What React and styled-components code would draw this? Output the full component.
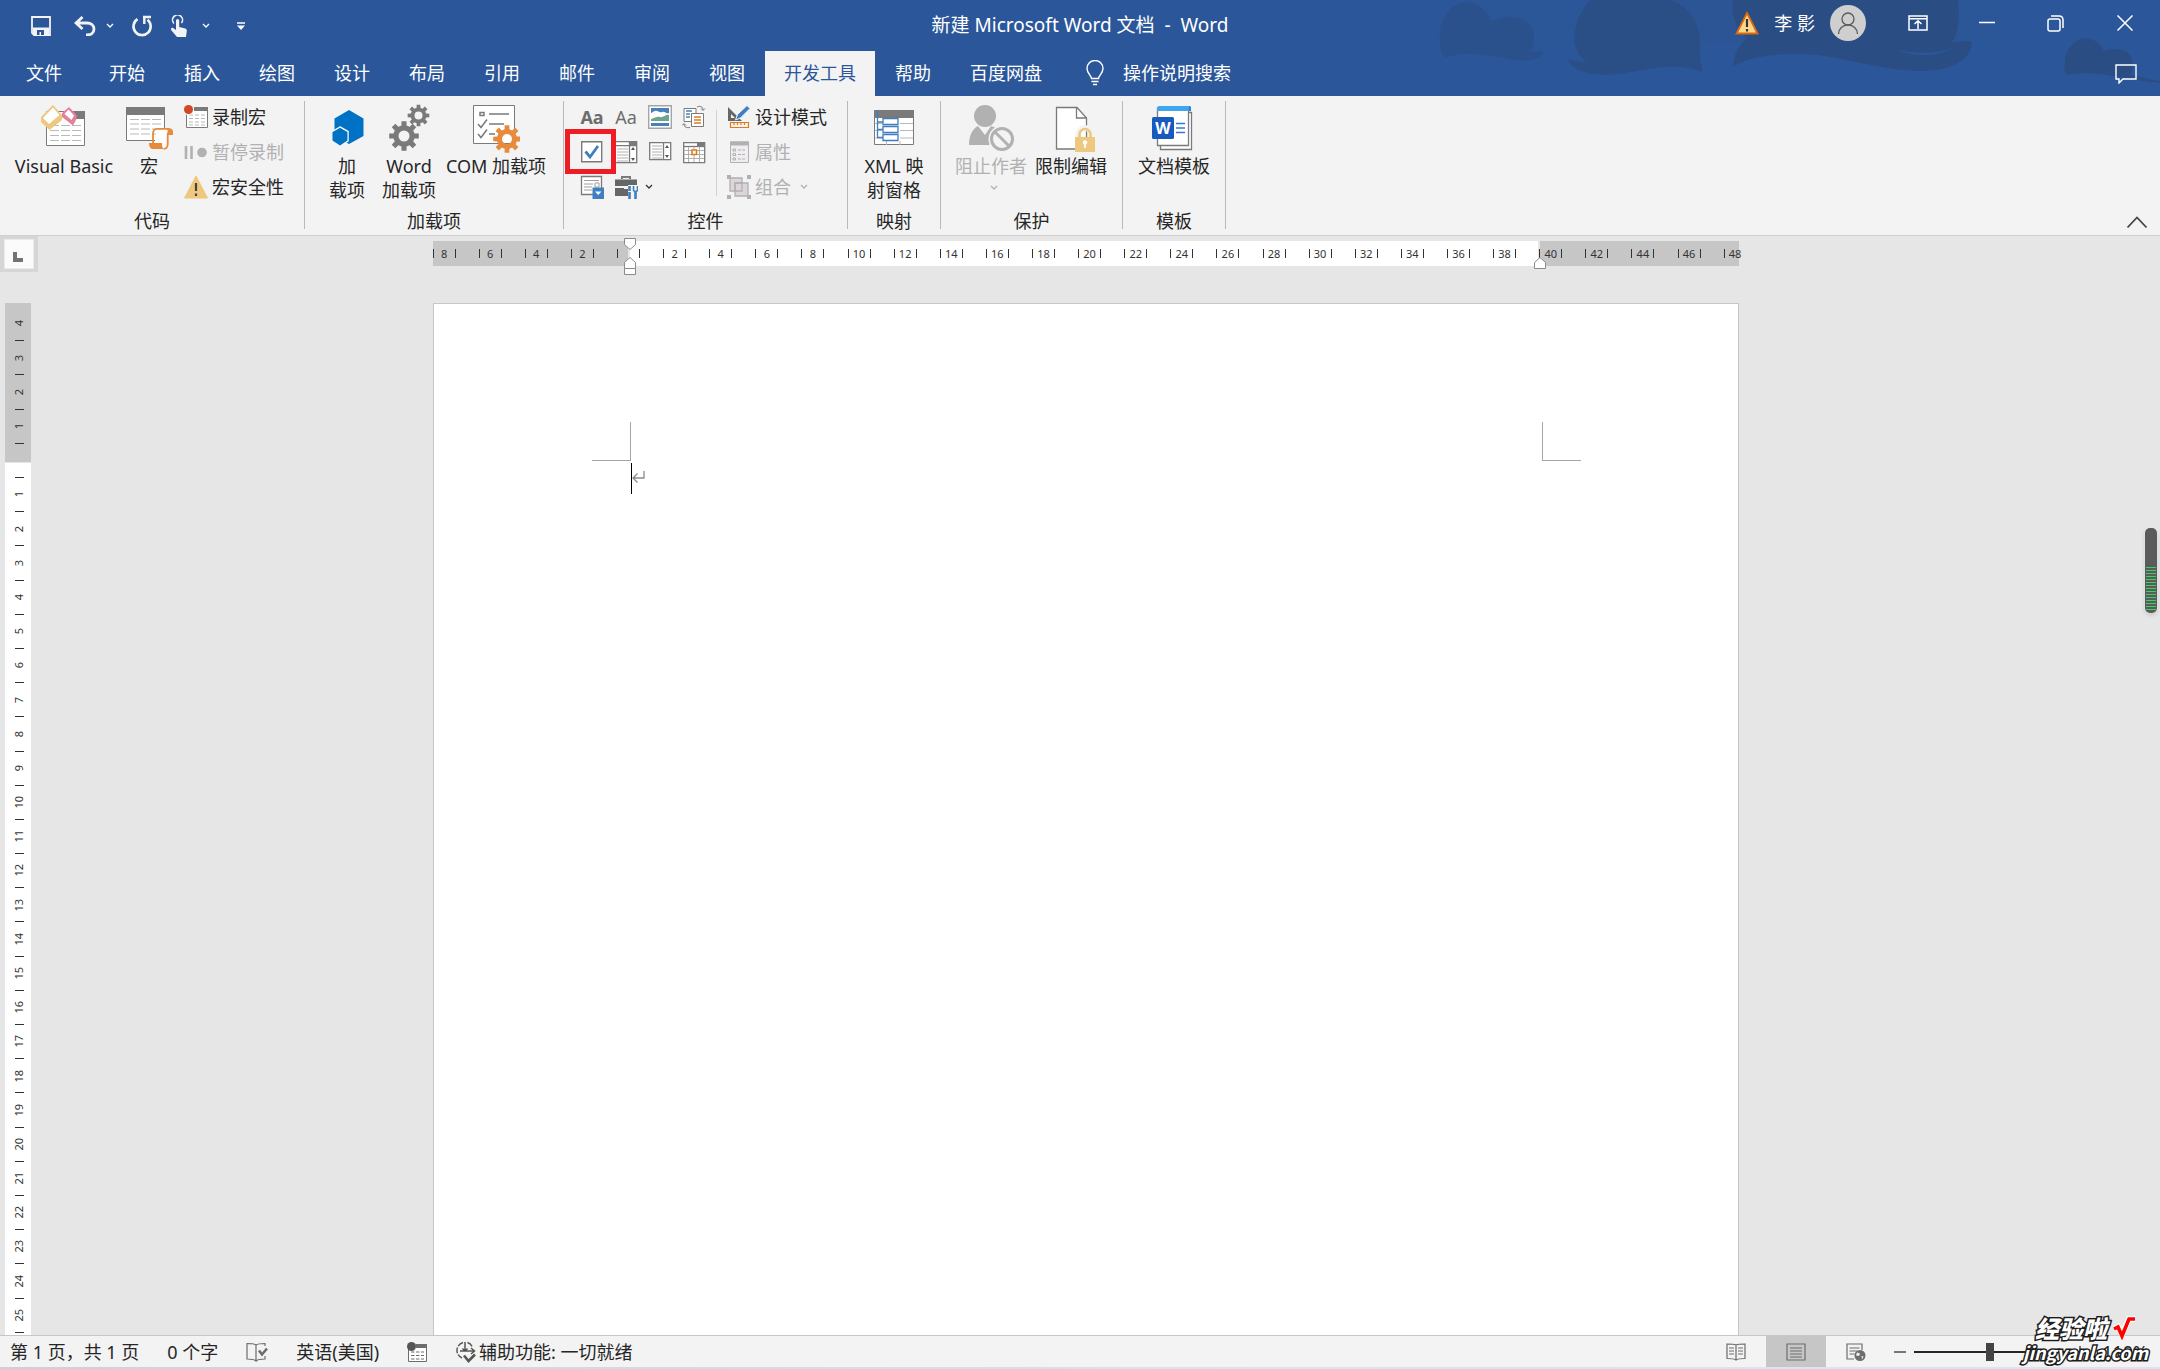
import React from "react";
import styled, { createGlobalStyle, css } from "styled-components";

const Global = createGlobalStyle`
  *, *::before, *::after { box-sizing: border-box; }
  body { margin: 0; }
  body, button, input {
    font-family: "Noto Sans", "Noto Sans CJK SC", sans-serif;
    font-size: 18px;
    line-height: 24px;
  }
  button { margin: 0; padding: 0; border: 0; background: none; color: inherit; cursor: pointer; white-space: nowrap; }
  svg { display: block; flex: none; }
`;

const Shell = styled.div`
  display: flex;
  flex-direction: column;
  height: 100vh;
  overflow: hidden;
  position: relative;
  background: #e6e6e6;
  color: #262626;
`;

/* ---------- header ---------- */

const Header = styled.header`
  position: relative;
  flex: none;
  background: #2b579a;
  color: #fff;
`;

const HeaderArt = styled.svg`
  position: absolute;
  top: 0;
  right: 0;
`;

const TitleBar = styled.div`
  position: relative;
  display: grid;
  grid-template-columns: 1fr auto 1fr;
  align-items: center;
  height: 51px;
`;

const QuickAccess = styled.div`
  display: flex;
  align-items: center;
  padding-left: 19px;
`;

const QuickButton = styled.button`
  display: flex;
  align-items: center;
  justify-content: center;
  width: ${(p) => p.$w}px;
  height: 32px;
`;

const DocTitle = styled.h1`
  margin: 0;
  padding-bottom: 2px;
  font-size: 19px;
  font-weight: 400;
  line-height: 24px;
  white-space: pre;
`;

const WindowTools = styled.div`
  display: flex;
  align-items: center;
  justify-content: flex-end;
  height: 46px;
  align-self: start;
  padding-right: 1px;
`;

const Account = styled.button`
  display: flex;
  align-items: center;
  gap: 15px;
  margin-right: 17px;
`;

const WindowButton = styled.button`
  display: flex;
  align-items: center;
  justify-content: center;
  width: 69px;
  height: 46px;
`;

const TabBar = styled.nav`
  position: relative;
  display: flex;
  gap: 1px;
  height: 45px;
`;

const Tab = styled.button`
  display: flex;
  align-items: center;
  padding: ${(p) => (p.$wide ? "0 27px 2px 26px" : "0 19px 2px")};
  height: 45px;
  ${(p) =>
    p.$active &&
    css`
      background: #f3f3f3;
      color: #2b579a;
    `}
`;

const TellMe = styled(Tab)`
  gap: 19px;
  padding-left: 24px;
`;

const CommentButton = styled.button`
  margin: 0 23px 0 auto;
`;

/* ---------- ribbon ---------- */

const Ribbon = styled.div`
  display: flex;
  flex: none;
  height: 140px;
  padding-top: 5px;
  background: #f3f3f3;
  border-bottom: 1px solid #d0d0d0;
`;

const GroupBox = styled.section`
  display: flex;
  flex-direction: column;
  width: ${(p) => p.$w}px;
  height: 128px;
  border-right: 1px solid #b9b9b9;
`;

const GroupBody = styled.div`
  display: flex;
  flex: 1;
  min-height: 0;
  padding-left: ${(p) => p.$pad}px;
`;

const GroupLabel = styled.h2`
  margin: 0 0 -4px;
  font-size: 18px;
  font-weight: 400;
  line-height: 24px;
  text-align: center;
`;

const BigButton = styled.button`
  display: flex;
  flex-direction: column;
  align-items: center;
  align-self: flex-start;
  width: ${(p) => p.$w}px;
  padding-top: 3px;
  color: ${(p) => (p.disabled ? "#b1b1b1" : "inherit")};
  cursor: ${(p) => (p.disabled ? "default" : "pointer")};
`;

const BigText = styled.span`
  white-space: pre;
`;

const SmallColumn = styled.div`
  display: flex;
  flex-direction: column;
  margin: -2px 0 0 ${(p) => p.$gap || 0}px;
`;

const SmallButton = styled.button`
  display: flex;
  flex: none;
  align-items: center;
  gap: 4px;
  height: 35px;
  padding: 0 4px;
  color: ${(p) => (p.disabled ? "#b1b1b1" : "inherit")};
  cursor: ${(p) => (p.disabled ? "default" : "pointer")};
`;

const ControlGrid = styled.div`
  display: grid;
  grid-template-columns: repeat(4, 34px);
  grid-auto-rows: 35px;
  align-content: start;
  margin-top: -2px;
`;

const ControlButton = styled.button`
  position: relative;
  display: flex;
  align-items: center;
  justify-content: center;
  gap: 7px;
  grid-column: span ${(p) => p.$span || 1};
  ${(p) => p.$span && "justify-content: flex-start; padding-left: 5px;"}
`;

const AaText = styled.span`
  font-size: 18px;
  line-height: 24px;
  color: #6d6d6d;
  font-weight: ${(p) => (p.$bold ? 700 : 400)};
`;

const RedFrame = styled.span`
  position: absolute;
  inset: -5px -7px -5px -10px;
  border: 5px solid #ee1c24;
  z-index: 1;
`;

const InnerRule = styled.div`
  width: 1px;
  height: 86px;
  margin: 9px 6px 0 5px;
  background: #d2d2d2;
`;

const CollapseButton = styled.button`
  align-self: flex-end;
  margin: 0 12px 6px auto;
`;

/* ---------- workspace ---------- */

const Workspace = styled.main`
  position: relative;
  display: grid;
  grid-template-columns: 38px 1fr;
  grid-template-rows: 67px 1fr;
  flex: 1;
  min-height: 0;
  padding-right: 26px;
  overflow: hidden;
`;

const TabStop = styled.button`
  display: flex;
  align-items: flex-start;
  width: 38px;
  height: 36px;
  padding: 3px 0 0 4px;
  background: #d6d6d6;
`;

const TabStopFace = styled.span`
  display: flex;
  width: 30px;
  height: 30px;
  padding: 12px 0 0 8px;
  background: #fbfbfb;
  border: 1px solid #ebebeb;
`;

const Ruler = styled.div`
  position: relative;
  width: 1306px;
  height: 25px;
  margin: 5px auto 0;
  background: linear-gradient(
    to right,
    #c6c6c6 195px,
    #e6e6e6 195px 197px,
    #fff 197px 1105px,
    #e6e6e6 1105px 1107px,
    #c6c6c6 1107px
  );
`;

const RulerScale = styled.div`
  display: flex;
  align-items: center;
  height: 25px;
  margin: 0 -19px 0 -12px;
`;

const RulerCell = styled.div`
  display: flex;
  flex: 1 0 0;
  align-items: center;
  justify-content: center;
`;

const RulerNumber = styled.span`
  width: 21px;
  font-size: 11px;
  line-height: 16px;
  text-align: center;
  color: #333;
`;

const RulerTick = styled.i`
  width: 1px;
  height: 9px;
  background: ${(p) => (p.$off ? "transparent" : "#333")};
`;

const Marker = styled.svg`
  position: absolute;
  left: ${(p) => p.$x}px;
  top: ${(p) => p.$y}px;
`;

const SideRuler = styled.div`
  display: flex;
  flex-direction: column;
  gap: 1px;
  width: 26px;
  margin-left: 5px;
  overflow: hidden;
`;

const SideMargin = styled.div`
  display: flex;
  flex: none;
  flex-direction: column;
  height: 159px;
  padding: 12px 0 10px 2px;
  background: #c6c6c6;
`;

const SideText = styled.div`
  display: flex;
  flex: 1;
  flex-direction: column;
  padding: 6px 0 0 2px;
  margin-bottom: -6px;
  background: #fff;
`;

const SideItem = styled.div`
  display: flex;
  flex: 1 0 0;
  align-items: center;
  justify-content: center;
  min-height: 0;
`;

const SideNumber = styled.span`
  writing-mode: vertical-rl;
  transform: rotate(180deg);
  font-size: 11px;
  line-height: 16px;
  color: #333;
`;

const SideTick = styled.i`
  width: 9px;
  height: 1px;
  background: #333;
`;

const Page = styled.article`
  width: 1306px;
  margin: 0 auto;
  background: #fff;
  border: 1px solid #c6c6c6;
  border-bottom: 0;
`;

const PageTop = styled.div`
  display: flex;
  align-items: flex-end;
  justify-content: space-between;
  height: 157px;
  padding: 0 157px 0 158px;
`;

const Corner = styled.i`
  width: 39px;
  height: 39px;
  border-bottom: 1px solid #a6a6a6;
  border-${(p) => p.$side}: 1px solid #a6a6a6;
`;

const Paragraph = styled.div`
  display: flex;
  align-items: flex-start;
  padding: 2px 197px 0;
`;

const Caret = styled.i`
  width: 1px;
  height: 31px;
  background: #000;
`;

const FloatMeter = styled.div`
  position: absolute;
  top: 292px;
  right: 3px;
  width: 12px;
  height: 85px;
  padding: 39px 1px 3px;
  border-radius: 5px;
  background: #5b5b5b;
  box-shadow: 0 2px 4px rgba(0, 0, 0, 0.14), 0 0 0 1px rgba(255, 255, 255, 0.25);
`;

const MeterBars = styled.div`
  height: 43px;
  background: repeating-linear-gradient(to bottom, #3dce66 0 1px, #5b5b5b 1px 3px);
`;

/* ---------- status bar ---------- */

const StatusBar = styled.footer`
  display: flex;
  flex: none;
  align-items: center;
  height: 32px;
  background: #f3f3f3;
  border-top: 1px solid #c6c6c6;
`;

const StatusLeft = styled.div`
  display: flex;
  align-items: center;
  gap: 28px;
  padding-left: 10px;
`;

const StatusItem = styled.button`
  display: flex;
  align-items: center;
  gap: 2px;
  white-space: pre;
`;

const StatusRight = styled.div`
  display: flex;
  align-items: center;
  margin-left: auto;
  padding-right: 6px;
`;

const ViewButton = styled.button`
  display: flex;
  align-items: center;
  justify-content: center;
  width: 60px;
  height: 31px;
  background: ${(p) => (p.$active ? "#c6c6c6" : "transparent")};
`;

const ZoomStep = styled.button`
  display: flex;
  align-items: center;
  justify-content: center;
  width: 28px;
  height: 31px;
`;

const ZoomSlider = styled.input`
  appearance: none;
  width: 152px;
  height: 18px;
  margin: 0;
  background: linear-gradient(#262626, #262626) center / 100% 2px no-repeat;
  &::-webkit-slider-thumb {
    appearance: none;
    width: 8px;
    height: 18px;
    background: #444;
  }
`;

const ZoomValue = styled.button`
  width: 60px;
  text-align: right;
  padding-right: 6px;
`;

const DesktopEdge = styled.div`
  flex: none;
  height: 2px;
  background: linear-gradient(to right, #ccd0de, #cfdbe6 30%, #d8e4f2 60%, #d6e6f8);
`;

const Watermark = styled.div`
  position: absolute;
  right: 12px;
  bottom: 5px;
  display: flex;
  flex-direction: column;
  align-items: flex-end;
  font-family: "Noto Sans CJK SC", sans-serif;
  font-weight: 900;
  font-style: italic;
  color: #fff;
  -webkit-text-stroke: 3px #1b1b1b;
  paint-order: stroke fill;
  pointer-events: none;
`;

const WatermarkTop = styled.div`
  display: flex;
  align-items: center;
  gap: 5px;
  padding-right: 12px;
  font-size: 24px;
  line-height: 22px;
`;

const WatermarkSite = styled.div`
  font-size: 18px;
  font-weight: 700;
  line-height: 24px;
`;

/* ---------- drawings ---------- */

const G = "#7a7a7a";
const D = "#b1b1b1";

const Svg = ({ w, h, children }) => (
  <svg width={w} height={h} viewBox={`0 0 ${w} ${h}`} fill="none" aria-hidden="true">
    {children}
  </svg>
);

const Big = ({ children }) => <Svg w={48} h={50}>{children}</Svg>;
const Small = ({ children }) => <Svg w={24} h={24}>{children}</Svg>;

const Chevron = ({ color = "#fff" }) => (
  <Svg w={8} h={6}>
    <path d="M1 1l3 3 3-3" stroke={color} strokeWidth="1.3" />
  </Svg>
);

function gear(cx, cy, r, hole) {
  const teeth = 8;
  const root = r * 0.72;
  const pts = [];
  for (let i = 0; i < teeth; i++) {
    const a = (i * 2 * Math.PI) / teeth;
    [[-0.24, root], [-0.17, r], [0.17, r], [0.24, root]].forEach(([o, rad]) => {
      pts.push(`${(cx + rad * Math.sin(a + o)).toFixed(2)} ${(cy - rad * Math.cos(a + o)).toFixed(2)}`);
    });
  }
  return `M${pts.join("L")}Z M${cx + hole} ${cy}a${hole} ${hole} 0 1 0 ${-2 * hole} 0a${hole} ${hole} 0 1 0 ${2 * hole} 0Z`;
}

const SaveIcon = () => (
  <Svg w={20} h={20}>
    <path d="M1 1h18v18H3l-2-2z" stroke="#f3f3f3" strokeWidth="1.8" />
    <path d="M2 11.500h16V19H2z" fill="#f3f3f3" />
    <path d="M6 14h7v5h-3v-3H8.500v3H6z" fill="#2b579a" />
  </Svg>
);
const UndoIcon = () => (
  <Svg w={22} h={20}>
    <path d="M8.500 1L2 7l6.500 6M3 7h10c4 0 7 2.500 7 6s-3 6-7 6h-1" stroke="#f3f3f3" strokeWidth="2.800" />
  </Svg>
);
const RepeatIcon = () => (
  <Svg w={22} h={22}>
    <path d="M6.500 4.200A8.600 8.600 0 1 0 16.500 4.800" stroke="#f3f3f3" strokeWidth="2.600" />
    <path d="M12 2h8M13.300 1v8" stroke="#f3f3f3" strokeWidth="2.400" />
  </Svg>
);
const TouchIcon = () => (
  <Svg w={18} h={22}>
    <path d="M4 8.500a5 5 0 1 1 7.500-.5" stroke="#f3f3f3" strokeWidth="1.600" />
    <path d="M6 5.500a1.600 1.600 0 0 1 3.200 0V12l6 1.500c1.500.5 1.800 1.500 1.500 3L16 22H7l-5.500-6.500c-1.500-2 .5-3.500 2-2.200L6 15z" fill="#f3f3f3" />
  </Svg>
);
const CustomizeIcon = () => (
  <Svg w={8} h={8}>
    <path d="M0 1h8" stroke="#fff" strokeWidth="1.500" />
    <path d="M0 3.500h8L4 8z" fill="#fff" />
  </Svg>
);
const AlertIcon = () => (
  <Svg w={24} h={24}>
    <path d="M12 2L22.500 22.500h-21z" fill="#fbd78b" stroke="#dc6a0c" strokeWidth="1.800" />
    <path d="M12 8v8M12 18v2.500" stroke="#333" strokeWidth="2.200" />
  </Svg>
);
const AvatarIcon = () => (
  <Svg w={36} h={36}>
    <circle cx="18" cy="18" r="18" fill="#d0cfcf" />
    <circle cx="18" cy="14" r="6" stroke="#5a5a5a" strokeWidth="1.300" />
    <path d="M8.500 29a9.500 9.200 0 0 1 19 0" stroke="#5a5a5a" strokeWidth="1.300" />
  </Svg>
);
const RibbonModeIcon = () => (
  <Svg w={20} h={16}>
    <path d="M1 1h18v14H1zM1 3.800h18M10 14V6M6.500 9L10 5.800 13.500 9" stroke="#fff" strokeWidth="1.500" />
  </Svg>
);
const MinimizeIcon = () => (
  <Svg w={16} h={16}><path d="M0 7.500h16" stroke="#fff" strokeWidth="1.500" /></Svg>
);
const RestoreIcon = () => (
  <Svg w={17} h={17}>
    <rect x="1" y="4" width="12" height="12" rx="2" stroke="#fff" strokeWidth="1.500" />
    <path d="M4 1h8c2.500 0 4 1.500 4 4v8" stroke="#fff" strokeWidth="1.500" />
  </Svg>
);
const CloseIcon = () => (
  <Svg w={16} h={16}><path d="M.5.5l15 15M15.500.5l-15 15" stroke="#fff" strokeWidth="1.500" /></Svg>
);
const BulbIcon = () => (
  <Svg w={18} h={26}>
    <path d="M5.500 18.500c0-3-4.500-5-4.500-10a8 8 0 0 1 16 0c0 5-4.500 7-4.500 10zM5.500 21.500h7M7 24.500h4" stroke="#fff" strokeWidth="1.400" />
  </Svg>
);
const CommentIcon = () => (
  <Svg w={22} h={20}>
    <path d="M1 1h20v14H8l-4 4v-4H1z" stroke="#fff" strokeWidth="1.400" />
  </Svg>
);

const VisualBasicIcon = () => (
  <Big>
    <path d="M6.500 7.500h38v34h-38z" fill="#fff" stroke={G} />
    <path d="M32 7h13v8H32z" fill={G} />
    <path d="M10 21.500h31M10 26.500h31M10 31.500h31M10 36.500h31" stroke="#b9b9b9" strokeDasharray="9 2" />
    <path d="M13 1l9 10v5L9.500 26 1 18v-5z" fill="#edc87e" />
    <path d="M13 3.500l6.500 7.500L9 20l-6-6z" fill="#fff" />
    <path d="M29 3l7.500 8v4L33 21.500 22 13V9z" fill="#e5809a" />
    <path d="M28.500 5.500l5.500 6-2.500 4.500-7-6z" fill="#fff" />
  </Big>
);
const MacroIcon = () => (
  <Big>
    <path d="M1.500 3.500h38v33h-38z" fill="#fff" stroke={G} />
    <path d="M1 3h39v8H1z" fill={G} />
    <path d="M5 15.500h31M5 20h31M5 25h31M5 30h31" stroke="#b9b9b9" strokeDasharray="9 2" />
    <path d="M31.500 25h13c2 0 2.500 2 2.500 5h-5v9c0 4-1 6-4 6h-9" fill="#fff" />
    <path d="M28 39V30c0-3.500 1-5.200 4-5.200h11.500c2.500 0 3.700 1.500 3.700 5.200h-4.500v10c0 3.500-1.200 4.800-4 4.800" stroke="#e68a3d" strokeWidth="1.800" />
    <path d="M42.500 25.500h5V31h-5zM24 39h13c0 3 0 4.500 2 6H28c-2.500 0-4-2-4-6z" fill="#e68a3d" />
  </Big>
);
const AddinIcon = () => (
  <Big>
    <path d="M26 6l14.500 8.500v17.500L26 40l-14.500-8V14.500z" fill="#0072c6" />
    <path d="M17 23l8 4.500v9.500l-8 4.500L9.500 37v-9.500z" fill="#0072c6" stroke="#f3f3f3" strokeWidth="1.500" />
    <path d="M17 24l7.200 4.200v8.400L17 41.500 9.500 36.600v-8.400z" fill="#0072c6" />
  </Big>
);
const GearsIcon = () => (
  <Big>
    <path d={gear(33.5, 11.5, 11, 4)} fill={G} fillRule="evenodd" />
    <path d={gear(19, 32, 15, 5.5)} fill={G} fillRule="evenodd" />
  </Big>
);
const ComIcon = () => (
  <Big>
    <path d="M1.500 1.500h41v38h-41z" fill="#fff" stroke={G} />
    <path d="M8 8.500h4v3H8zM17 10h20M17 20h15M17 30h6M6 20l3 3.500 6-8M6 30l3 3.500 6-8" stroke={G} strokeWidth="1.500" />
    <path d={gear(35, 35, 14, 5)} fill="#e68a3d" fillRule="evenodd" />
  </Big>
);
const XmlIcon = () => (
  <Big>
    <path d="M4.500 6.500h39v34h-39z" fill="#fff" stroke={G} />
    <path d="M4 6h40v8H4z" fill={G} />
    <path d="M30 19.500h13M30 26.500h13M30 34h13M5 19.500h7M5 26.500h7M5 34h7M16.500 37v4M30 37v4" stroke="#b9b9b9" />
    <path d="M7.500 6v27.500H13M7.500 18h5.500M7.500 25.500h5.500" stroke="#3f7ec0" strokeWidth="1.300" />
    <path d="M13 14.500h15v6H13zM13 22.500h15v6H13zM13 30.500h15v6H13z" fill="#fff" stroke="#3f7ec0" strokeWidth="1.300" />
  </Big>
);
const BlockAuthorIcon = () => (
  <Big>
    <ellipse cx="18" cy="12" rx="11" ry="11" fill={D} />
    <path d="M2 41c0-9 3-16 9-19l7 9 6-9c4 1 6 3 8 6l-10 13z" fill={D} />
    <circle cx="35" cy="35" r="11" fill="#f3f3f3" stroke="#f3f3f3" strokeWidth="5" />
    <circle cx="35" cy="35" r="10.500" stroke={D} strokeWidth="3" />
    <path d="M27.500 27.500l15 15" stroke={D} strokeWidth="3" />
  </Big>
);
const RestrictIcon = () => (
  <Big>
    <path d="M9.500 3.500H30L39.500 14v31h-30z" fill="#fff" stroke={G} strokeWidth="1.300" />
    <path d="M29.500 3.500V14h10" stroke={G} strokeWidth="1.300" />
    <path d="M31.500 35v-4.500a6.500 6.500 0 0 1 13 0V35" stroke="#f3f3f3" strokeWidth="6" />
    <path d="M32.500 35v-4.500a5.500 5.500 0 0 1 11 0V35" stroke="#edc87e" strokeWidth="2.600" />
    <path d="M28 33h20v15H28z" fill="#edc87e" />
    <circle cx="38" cy="38.500" r="2.200" fill="#fff" />
    <path d="M38 39v5" stroke="#fff" strokeWidth="1.800" />
  </Big>
);
const TemplateIcon = () => (
  <Big>
    <path d="M10.500 8.500h31v37h-31z" fill="#fff" stroke={G} strokeWidth="1.300" />
    <path d="M7.500 4.500h31v37h-31z" fill="#fff" stroke={G} strokeWidth="1.300" />
    <path d="M9 2h30c1.500 0 2 1 2 2v3H7V4c0-1 1-2 2-2z" fill="#41a5ee" />
    <path d="M39 2c1.500 0 2 1 2 2v3h-2z" fill="#2b7cd3" />
    <path d="M26 19.500h9M26 24h9M26 28.500h9" stroke="#2b7cd3" strokeWidth="1.300" />
    <rect x="2" y="13" width="22" height="22" rx="1.500" fill="#185abd" />
    <text x="13" y="30" textAnchor="middle" fontFamily="Open Sans, sans-serif" fontWeight="700" fontSize="16" fill="#fff">W</text>
  </Big>
);

const RecordIcon = () => (
  <Small>
    <path d="M2.500 4h21v18.500h-21z" fill="#fff" stroke={G} />
    <path d="M10 2h14v4H10z" fill={G} />
    <path d="M5 10h17M5 13.500h17M5 17h17M5 20h17" stroke="#b9b9b9" strokeDasharray="4 2" />
    <circle cx="4.500" cy="4.500" r="5.500" fill="#f3f3f3" />
    <circle cx="4.500" cy="4.500" r="4.500" fill="#d24726" />
  </Small>
);
const PauseIcon = () => (
  <Small>
    <path d="M2 6v13M7.500 6v13" stroke={D} strokeWidth="2.600" />
    <circle cx="18" cy="12.500" r="4.800" fill={D} />
  </Small>
);
const SecurityIcon = () => (
  <Small>
    <path d="M12 1l11.500 22H.5z" fill="#edc87e" stroke="#edc87e" strokeLinejoin="round" />
    <path d="M12 8v8M12 18.500v2.500" stroke="#444" strokeWidth="2.200" />
  </Small>
);
const PictureIcon = () => (
  <Small>
    <path d="M.7.700h22.600v22.600H.700z" fill="#fff" stroke="#a5a5a5" strokeWidth="1.400" />
    <path d="M3 3h18v5c-3 1-4-2-7-1S10 5 7 6 4 8 3 8z" fill="#4a80b8" />
    <path d="M3 14c4-1 6-3 9-2s6-3 9-2v6H3z" fill="#6fa58e" />
    <path d="M3 18h18v3H3z" fill="#4a80b8" />
  </Small>
);
const GalleryIcon = () => (
  <Small>
    <path d="M2 3.500h12v13H2z" fill="#fff" stroke={G} />
    <path d="M4 6h6M4 9h4M4 12h4" stroke="#4a80b8" strokeWidth="1.400" />
    <path d="M9.500 8.500h12v13h-12z" fill="#fff" stroke={G} />
    <path d="M12 12h7M12 15h7M12 18h7" stroke="#e07b20" strokeWidth="1.600" />
    <path d="M15 2c3-1.500 6-.5 6 3M19 3.500l2 2 2-2M8 22.500c-3 .5-6 0-6-3.500M0 20.500l2-2 2 2" stroke={G} />
  </Small>
);
const CheckIcon = () => (
  <Small>
    <path d="M1.700 1.700h20v20h-20z" fill="#fff" stroke={G} strokeWidth="1.400" />
    <path d="M5.500 11.500l4.500 5.500 8-11" stroke="#3f7ec0" strokeWidth="2.800" />
  </Small>
);
const ComboIcon = () => (
  <Small>
    <path d="M.7 1.700h22v21h-22zM.7 5.700h22M15.500 2v21" fill="#fff" stroke={G} strokeWidth="1.300" />
    <path d="M15 2h8v4h-8z" fill={G} />
    <path d="M3 9h11M3 12h11M3 15h11M3 18h11M3 21h11" stroke="#b0b0b0" />
    <path d="M17 10l2-3 2 3zM17 18l2 3 2-3z" fill="#555" />
  </Small>
);
const ListIcon = () => (
  <Small>
    <path d="M1.700 2.700h21v17h-21zM15.500 3v17" fill="#fff" stroke={G} strokeWidth="1.300" />
    <path d="M4 6h10M4 9h10M4 12h10M4 15h10M4 18h10" stroke="#b0b0b0" />
    <path d="M17 8l2-3 2 3zM17 15l2 3 2-3z" fill="#555" />
  </Small>
);
const DateIcon = () => (
  <Small>
    <path d="M1.700 2.700h21v20h-21z" fill="#fff" stroke={G} strokeWidth="1.300" />
    <path d="M2 6.500h20" stroke={G} strokeWidth="1.300" />
    <path d="M15 2h8v4h-8z" fill={G} />
    <path d="M6.500 7v15M17.500 7v15M12 7v15M2 10.500h20M2 14.500h20M2 18.500h20" stroke="#b0b0b0" />
    <path d="M10 10h4.500v4.500H10z" fill="#fff" stroke="#e07b20" strokeWidth="1.600" />
  </Small>
);
const DropIcon = () => (
  <Small>
    <path d="M1.500 1.500h20v18h-20z" fill="#fff" stroke={G} strokeWidth="1.300" />
    <path d="M4 5.500h15M4 9h9M4 12h8M4 15h8" stroke="#a0a0a0" />
    <path d="M15 8h4v4h-4z" stroke="#a0a0a0" />
    <path d="M12.500 12.500H24V24H12.500z" fill="#3f7ec0" />
    <path d="M15 16.500h6.500L18.200 20z" fill="#fff" />
  </Small>
);
const LegacyIcon = () => (
  <Small>
    <path d="M8 4V2h8v2" stroke={G} strokeWidth="2" />
    <path d="M1 4.500h22V11H1zM1 13h13v8H1z" fill="#666" />
    <path d="M10 11h4v3h-4z" fill="#f3f3f3" />
    <path d="M14 10v14h10V10z" fill="#f3f3f3" />
    <path d="M15.500 11v5M15.500 17v7M21.500 17v7" stroke="#3f7ec0" strokeWidth="2.600" />
    <path d="M19.500 11v3.500a2 2 0 0 0 4 0V11" stroke="#3f7ec0" strokeWidth="1.600" />
  </Small>
);
const DesignIcon = () => (
  <Small>
    <path d="M1 2v14h14z" fill="#666" />
    <path d="M4 9v4h4z" fill="#f3f3f3" />
    <path d="M8.500 15l2-5.500L20 .500l3 3L13.500 13z" fill="#3f7ec0" stroke="#f3f3f3" />
    <path d="M3.500 17.500h18v5h-18zM7 18v2M10.500 18v2M14 18v2M17.500 18v2" stroke="#e07b20" strokeWidth="1.200" />
  </Small>
);
const PropsIcon = () => (
  <Small>
    <path d="M3.500 2h18v20.500h-18z" fill="#f0edf1" stroke={D} />
    <path d="M3 1.500h19v4H3z" fill={D} />
    <path d="M6 9h2.500v2H6zM6 13.500h2.500v2H6zM6 18h2.500v2H6z" stroke={D} />
    <path d="M11 10h8M11 14.500h8M11 19h8" stroke={D} strokeDasharray="3 1" />
  </Small>
);
const GroupIcon = () => (
  <Small>
    <path d="M3 3h12v13H3z" fill="#dcd6dc" stroke={D} strokeWidth="1.300" />
    <path d="M8 8h13v13H8z" fill="#dcd6dc" stroke={D} strokeWidth="1.300" />
    <path d="M8 8h7v8H8z" stroke={D} strokeWidth="1.300" />
    <path d="M0 0h4v4H0zM20 0h4v4h-4zM0 20h4v4H0zM20 20h4v4h-4z" fill={D} />
  </Small>
);

const ProofIcon = () => (
  <Svg w={22} h={20}>
    <path d="M10 3C8 1.500 4 1.500 1 1.500V17c4 0 7 0 9 2zM10 3c2-1.500 5-1.500 9-1.500V4M10 19c2-2 5-2 9-2v-3" stroke="#6d6d6d" strokeWidth="1.200" />
    <path d="M13 8.500l3 4 5-6" stroke="#6d6d6d" strokeWidth="2.600" />
  </Svg>
);
const StatusMacroIcon = () => (
  <Svg w={20} h={20}>
    <path d="M1.500 3h18v16.500h-18z" fill="#fff" stroke="#6d6d6d" />
    <path d="M9 2h11v4H9z" fill="#6d6d6d" />
    <path d="M4 10h13M4 13.500h13M4 17h13" stroke="#6d6d6d" strokeDasharray="3.500 1.500" />
    <circle cx="4.500" cy="4.500" r="4.500" fill="#555" />
  </Svg>
);
const AccessIcon = () => (
  <Svg w={22} h={22}>
    <path d="M8 1.500a8.200 8.200 0 0 0-1 15.500M12.500 1.500a8 8 0 0 1 5 5" stroke="#555" strokeWidth="1.400" strokeDasharray="6 1.500" />
    <path d="M10 1v9M5 10h14M16 7l3.500 3-3.500 3M7.500 7.500L10 10l2.500-2.500" stroke="#555" strokeWidth="1.500" />
    <path d="M9 14.500l4.500 5.500L20 13.500" stroke="#555" strokeWidth="2.600" />
  </Svg>
);
const ReadIcon = () => (
  <Svg w={20} h={18}>
    <path d="M10 2C8 1 4 1 1 1v14.500c4 0 7 0 9 1.500 2-1.500 5-1.500 9-1.500V1c-3 0-7 0-9 1zM10 2v15" stroke="#6d6d6d" strokeWidth="1.200" />
    <path d="M3 5h5M3 8h5M3 11h5M12 5h5M12 8h5M12 11h5" stroke="#6d6d6d" strokeWidth="1.200" />
  </Svg>
);
const PrintIcon = () => (
  <Svg w={20} h={18}>
    <path d="M1 1h18v16H1zM4 5h12M4 8h12M4 11h12M4 14h12" stroke="#6d6d6d" strokeWidth="1.200" />
  </Svg>
);
const WebIcon = () => (
  <Svg w={20} h={18}>
    <path d="M8 16H1V1h15v6M3.500 5h10M3.500 8h8M3.500 11h5" stroke="#6d6d6d" strokeWidth="1.200" />
    <circle cx="14" cy="12.500" r="5.500" fill="#6d6d6d" />
    <path d="M11 9.500l3 1-1 2.500-3-.5zM15.500 13l2 .5-1.500 3z" fill="#f3f3f3" />
  </Svg>
);

/* ---------- parts ---------- */

const SMALL_CODE = [
  ["录制宏", RecordIcon, false],
  ["暂停录制", PauseIcon, true],
  ["宏安全性", SecurityIcon, false],
];

const CONTROLS = [
  ["图片内容控件", PictureIcon],
  ["构建基块库内容控件", GalleryIcon],
  ["复选框内容控件", CheckIcon],
  ["组合框内容控件", ComboIcon],
  ["下拉列表内容控件", ListIcon],
  ["日期选取器内容控件", DateIcon],
  ["重复分区内容控件", DropIcon],
];

const TABS = ["开始", "插入", "绘图", "设计", "布局", "引用", "邮件", "审阅", "视图", "开发工具", "帮助", "百度网盘"];

function Command({ w, icon: Icon, text, disabled, menu }) {
  return (
    <BigButton $w={w} disabled={disabled}>
      <Icon />
      <BigText>{text}</BigText>
      {menu && <Svg w={16} h={18}><path d="M8 8l3 3 3-3" stroke={D} strokeWidth="1.300" /></Svg>}
    </BigButton>
  );
}

function Group({ w, pad = 0, label, children }) {
  return (
    <GroupBox $w={w} aria-label={label}>
      <GroupBody $pad={pad}>{children}</GroupBody>
      <GroupLabel>{label}</GroupLabel>
    </GroupBox>
  );
}

function HorizontalRuler() {
  const cells = Array.from({ length: 29 }, (_, i) => (i - 4) * 2);
  return (
    <Ruler>
      <RulerScale>
        {cells.map((n) => (
          <RulerCell key={n}>
            <RulerTick />
            <RulerNumber>{n === 0 ? "" : Math.abs(n)}</RulerNumber>
            <RulerTick $off={n === 48} />
          </RulerCell>
        ))}
      </RulerScale>
      <Marker $x={190} $y={-3} width="14" height="38" viewBox="0 0 14 38" fill="#fff" stroke="#8a8a8a">
        <path d="M1.500.500h11v6l-5.500 5-5.500-5zM7 19.500l5.500 5v6h-11v-6zM1.500 30.500h11v6h-11z" />
      </Marker>
      <Marker $x={1100} $y={16} width="14" height="12" viewBox="0 0 14 12" fill="#fff" stroke="#8a8a8a">
        <path d="M7 .5l5.500 5v6h-11v-6z" />
      </Marker>
    </Ruler>
  );
}

function sideItems(labels) {
  return labels.map((n, i) => (
    <SideItem key={i}>{n ? <SideNumber>{n}</SideNumber> : <SideTick />}</SideItem>
  ));
}

function VerticalRuler() {
  const body = Array.from({ length: 51 }, (_, i) => (i % 2 ? (i + 1) / 2 : 0));
  return (
    <SideRuler>
      <SideMargin>{sideItems([4, 0, 3, 0, 2, 0, 1, 0])}</SideMargin>
      <SideText>{sideItems(body)}</SideText>
    </SideRuler>
  );
}

export default function App() {
  return (
    <Shell>
      <Global />
      <Header>
        <HeaderArt width="730" height="96" viewBox="0 0 730 96" aria-hidden="true">
          <defs>
            <linearGradient id="sky" x1="0" x2="1">
              <stop offset="0" stopColor="#2a4e84" stopOpacity="0" />
              <stop offset="0.4" stopColor="#2a4e84" stopOpacity="0.25" />
              <stop offset="1" stopColor="#2a4e84" stopOpacity="0" />
            </linearGradient>
          </defs>
          <path d="M0 0h640v44H0z" fill="url(#sky)" />
          <g fill="#2a4e84">
            <path opacity=".65" d="M14 58C6 45 8 10 30 3c18-4 26 8 31 18 14-4 24-6 35 1 10 6 10 22 4 30 6 0 14-2 14 0-2 8-18 10-32 8C60 54 30 50 9 60z" />
            <path opacity=".85" d="M160 0h80c24 8 32 30 30 52 0 6 2 14 2 20-30-12-60 0-85 2-20 2-42 0-50-15 6 2 12 3 20 3-18-10-16-40 3-62z" />
            <path d="M303 0h225c2 20 0 34-6 42 8 0 16-2 20 0 0 20-26 30-56 29-50-3-80-17-118-17-24 0-48 2-65 13 0-12 6-22 14-29-12-10-16-24-14-38z" />
            <path d="M636 75c-4-14 0-30 14-36 12-3 20 4 24 12 10-4 22-2 26 4 4 8 4 14 0 20l30 6v2c-30-2-62-14-94-8z" />
          </g>
          <path d="M468 50c18 4 38 4 56-2-14 8-38 10-56 2z" fill="#2b579a" />
        </HeaderArt>
        <TitleBar>
          <QuickAccess>
            <QuickButton $w={44} aria-label="保存"><SaveIcon /></QuickButton>
            <QuickButton $w={43} aria-label="撤消"><UndoIcon /></QuickButton>
            <QuickButton $w={8} aria-label="撤消列表"><Chevron /></QuickButton>
            <QuickButton $w={56} aria-label="重复"><RepeatIcon /></QuickButton>
            <QuickButton $w={18} aria-label="触摸/鼠标模式"><TouchIcon /></QuickButton>
            <QuickButton $w={36} aria-label="模式选项"><Chevron /></QuickButton>
            <QuickButton $w={34} aria-label="自定义快速访问工具栏"><CustomizeIcon /></QuickButton>
          </QuickAccess>
          <DocTitle>{"新建 Microsoft Word 文档  -  Word"}</DocTitle>
          <WindowTools>
            <Account>
              <AlertIcon />
              <span>李 影</span>
              <AvatarIcon />
            </Account>
            <WindowButton aria-label="功能区显示选项"><RibbonModeIcon /></WindowButton>
            <WindowButton aria-label="最小化"><MinimizeIcon /></WindowButton>
            <WindowButton aria-label="向下还原"><RestoreIcon /></WindowButton>
            <WindowButton aria-label="关闭"><CloseIcon /></WindowButton>
          </WindowTools>
        </TitleBar>
        <TabBar>
          <Tab $wide>文件</Tab>
          {TABS.map((t) => (
            <Tab key={t} $active={t === "开发工具"}>{t}</Tab>
          ))}
          <TellMe><BulbIcon />操作说明搜索</TellMe>
          <CommentButton aria-label="批注"><CommentIcon /></CommentButton>
        </TabBar>
      </Header>

      <Ribbon>
        <Group w={305} pad={8} label="代码">
          <Command w={112} icon={VisualBasicIcon} text="Visual Basic" />
          <Command w={58} icon={MacroIcon} text="宏" />
          <SmallColumn $gap={2}>
            {SMALL_CODE.map(([text, Icon, off]) => (
              <SmallButton key={text} disabled={off}><Icon />{text}</SmallButton>
            ))}
          </SmallColumn>
        </Group>
        <Group w={259} pad={14} label="加载项">
          <Command w={56} icon={AddinIcon} text={"加\n载项"} />
          <Command w={68} icon={GearsIcon} text={"Word\n加载项"} />
          <Command w={106} icon={ComIcon} text="COM 加载项" />
        </Group>
        <Group w={284} pad={11} label="控件">
          <ControlGrid>
            <ControlButton aria-label="格式文本内容控件"><AaText $bold>Aa</AaText></ControlButton>
            <ControlButton aria-label="纯文本内容控件"><AaText>Aa</AaText></ControlButton>
            {CONTROLS.map(([name, Icon]) => (
              <ControlButton key={name} aria-label={name}>
                <Icon />
                {Icon === CheckIcon && <RedFrame />}
              </ControlButton>
            ))}
            <ControlButton $span={2} aria-label="旧式工具"><LegacyIcon /><Chevron color="#333" /></ControlButton>
          </ControlGrid>
          <InnerRule />
          <SmallColumn>
            <SmallButton><DesignIcon />设计模式</SmallButton>
            <SmallButton disabled><PropsIcon />属性</SmallButton>
            <SmallButton disabled><GroupIcon />组合&nbsp;<Chevron color={D} /></SmallButton>
          </SmallColumn>
        </Group>
        <Group w={93} pad={6} label="映射">
          <Command w={80} icon={XmlIcon} text={"XML 映\n射窗格"} />
        </Group>
        <Group w={182} pad={10} label="保护">
          <Command w={80} icon={BlockAuthorIcon} text="阻止作者" disabled menu />
          <Command w={80} icon={RestrictIcon} text="限制编辑" />
        </Group>
        <Group w={103} pad={11} label="模板">
          <Command w={80} icon={TemplateIcon} text="文档模板" />
        </Group>
        <CollapseButton aria-label="折叠功能区">
          <Svg w={22} h={14}><path d="M1.500 12.500L11 2.500l9.500 10" stroke="#444" strokeWidth="1.800" /></Svg>
        </CollapseButton>
      </Ribbon>

      <Workspace>
        <TabStop aria-label="左对齐式制表符">
          <TabStopFace>
            <Svg w={10} h={10}><path d="M2 0v8h8" stroke="#737373" strokeWidth="4" /></Svg>
          </TabStopFace>
        </TabStop>
        <HorizontalRuler />
        <VerticalRuler />
        <Page>
          <PageTop>
            <Corner $side="right" />
            <Corner $side="left" />
          </PageTop>
          <Paragraph>
            <Caret />
            <Svg w={13} h={24}>
              <path d="M12 8v7H1M5.500 10.500L1 15l4.500 4.500" stroke="#8c8c8c" strokeWidth="1.300" />
            </Svg>
          </Paragraph>
        </Page>
        <FloatMeter><MeterBars /></FloatMeter>
      </Workspace>

      <StatusBar>
        <StatusLeft>
          <StatusItem>第 1 页，共 1 页</StatusItem>
          <StatusItem>0 个字</StatusItem>
          <StatusItem aria-label="校对"><ProofIcon /></StatusItem>
          <StatusItem>英语(美国)</StatusItem>
          <StatusItem aria-label="宏录制"><StatusMacroIcon /></StatusItem>
          <StatusItem><AccessIcon />辅助功能: 一切就绪</StatusItem>
        </StatusLeft>
        <StatusRight>
          <ViewButton aria-label="阅读视图"><ReadIcon /></ViewButton>
          <ViewButton $active aria-label="页面视图"><PrintIcon /></ViewButton>
          <ViewButton aria-label="Web 版式视图"><WebIcon /></ViewButton>
          <ZoomStep aria-label="缩小"><Svg w={12} h={12}><path d="M0 6h12" stroke="#333" strokeWidth="1.300" /></Svg></ZoomStep>
          <ZoomSlider type="range" min="0" max="100" defaultValue="50" aria-label="缩放" />
          <ZoomStep aria-label="放大"><Svg w={12} h={12}><path d="M0 6h12M6 0v12" stroke="#333" strokeWidth="1.300" /></Svg></ZoomStep>
          <ZoomValue>110%</ZoomValue>
        </StatusRight>
      </StatusBar>
      <DesktopEdge />

      <Watermark>
        <WatermarkTop>
          <span>经验啦</span>
          <Svg w={24} h={24}>
            <path d="M2 13l4-2 4 7L17 3h6" stroke="#fff" strokeWidth="6" />
            <path d="M2 13l4-2 4 9L17 3h6" stroke="#f00" strokeWidth="3.600" />
          </Svg>
        </WatermarkTop>
        <WatermarkSite>jingyanla.com</WatermarkSite>
      </Watermark>
    </Shell>
  );
}
